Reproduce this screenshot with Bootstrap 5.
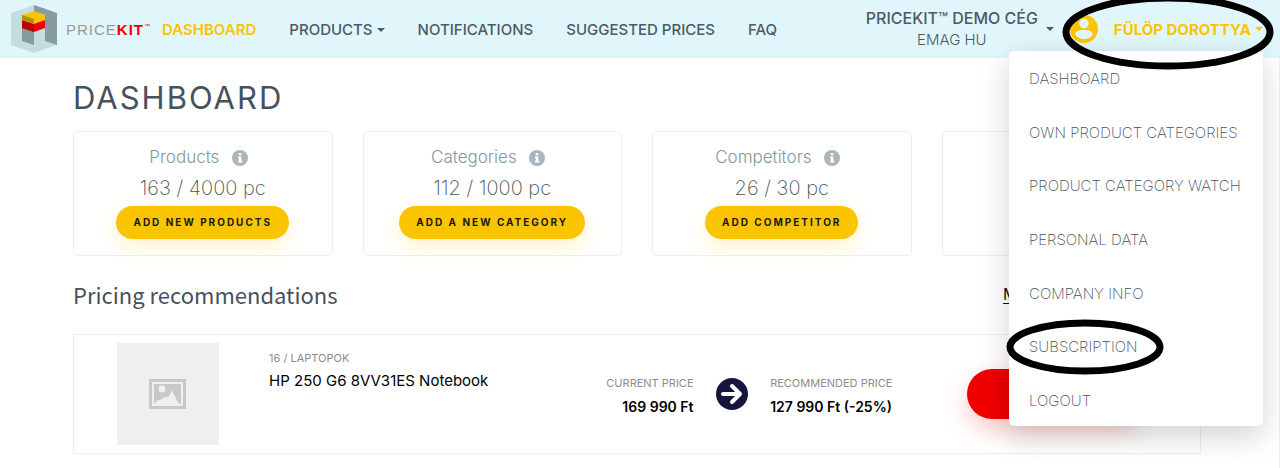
<!DOCTYPE html>
<html lang="en">
<head>
<meta charset="utf-8">
<meta name="viewport" content="width=device-width, initial-scale=1">
<title>PriceKit Dashboard</title>
<link href="https://cdn.jsdelivr.net/npm/bootstrap@5.3.0/dist/css/bootstrap.min.css" rel="stylesheet">
<style>
body{font-family:"Inter","Open Sans",sans-serif;color:#46515c;background:#fff;overflow-x:hidden}
a{color:inherit;text-decoration:none}
.topbar{background:#e1f6fa;min-height:58px;padding:0 17px 0 11px;font-size:15px;line-height:21px;font-weight:500;color:#4b5a66}
.topbar a:hover{color:#fac400}
.brand-name{font-family:"Liberation Sans",sans-serif;font-size:15px;color:#999;letter-spacing:1px;margin-left:9px;width:83px}
.brand-name b{color:#f00000}
.brand-name sup{font-size:6px;letter-spacing:0;top:-7px;color:#f00000}
.main-links{margin-left:13px;gap:33px}
.main-links .current,.user-link{color:#fac400}
.main-links .current{font-weight:600}
.user-link{font-weight:700}
.caret{display:inline-block;border:4px solid transparent;border-top-color:currentColor;border-bottom:0;vertical-align:3px;margin-left:4px}
.company{font-weight:500}
.company small{display:block;font-weight:300;font-size:15px}
.company-name{font-size:16px;font-weight:500}
.user-menu{position:absolute;top:100%;right:0;width:254px;height:375px;z-index:5;background:#fff;border-radius:5px;box-shadow:0 10px 30px rgba(0,0,0,.18);font-weight:200;font-size:15px;color:#46515c}
.user-menu a{padding:2px 20px 0}
.ring{position:absolute;z-index:6;pointer-events:none;overflow:visible}
.ring-user{left:-9px;top:-12px}
.ring-item{left:-2px;top:0}
main{border-right:1px solid #f0f2f2;padding:22px 5px 14px 0}
.page-box{max-width:1158px;margin:0 auto;padding:0 15px}
h1{font-size:31px;line-height:36px;font-weight:400;letter-spacing:2px;margin-bottom:15px}
.stat-row{--bs-gutter-x:30px}
.stat{border:1px solid #e8f0f0;border-radius:5px;height:125px;padding-top:13px;text-align:center}
.stat h3{font-size:17px;line-height:24px;font-weight:300;color:#7f9999;margin:0;padding-right:8px}
.stat h3 svg{margin-left:8px;vertical-align:-3px}
.stat p{font-size:20px;line-height:28px;font-weight:200;margin:5px 0 4px}
.pill{border:0;border-radius:25px;background:#fac400;color:#1a1a1a;font-size:10px;font-weight:700;letter-spacing:2px;height:33px;padding:0 17px;box-shadow:0 8px 24px rgba(250,196,0,.22)}
h2{font-family:"Noto Sans CJK SC","Open Sans",sans-serif;font-size:22px;line-height:32px;font-weight:400;margin:0}
.section-head{padding:22px 0 24px}
.more{width:198px;color:#111;text-decoration:underline;text-underline-offset:3px}
.offer{display:grid;grid-template-columns:188fr 347fr 84fr 77fr 198fr 234fr;border:1px solid #e8f0f0;height:120px;color:#000}
.shot{width:102px;height:102px;background:#f0eeef}
.tag{font-size:11px;line-height:14px;font-weight:400;color:#8c8c8c;white-space:nowrap}
.val{font-size:14px;line-height:20px;font-weight:600;white-space:nowrap;margin-top:7px}
.item-name{font-size:15px;line-height:20px;margin-top:6px}
.accept{border:0;border-radius:25px;background:#f00000;width:176px;height:50px;box-shadow:0 10px 26px rgba(240,0,0,.22)}
</style>
</head>
<body>
<header class="topbar d-flex align-items-center">
  <a href="#" class="d-flex align-items-center" aria-label="PriceKit">
    <svg width="46" height="48" viewBox="0 0 46 48"><path fill="#c3dee0" d="M23 0 46 8v32l-23 8L0 40V8z"/><path fill="#869c9d" d="M23 0 46 8v32l-12-4V10L23 7zM11 20l12 4v16l-12-4z"/><path fill="#f00000" d="m11 15 12 3 11-3v8l-11 4-12-4z"/><path fill="#bd0000" d="m11 15 12 3v9l-12-4z"/><path fill="#fac400" d="m11 10 12-4 11 4v5l-11 4-12-4z"/><path fill="#b48f0a" d="m11 10 12 4v5l-12-4z"/></svg>
    <span class="brand-name text-nowrap">PRICE<b>KIT</b><sup>™</sup></span>
  </a>
  <nav class="main-links d-flex text-nowrap">
    <a href="#" class="current">DASHBOARD</a>
    <a href="#">PRODUCTS<span class="caret"></span></a>
    <a href="#">NOTIFICATIONS</a>
    <a href="#">SUGGESTED PRICES</a>
    <a href="#">FAQ</a>
  </nav>
  <div class="d-flex align-items-center ms-auto text-nowrap">
    <a href="#" class="company d-flex align-items-center"><span class="text-center"><span class="company-name">PRICEKIT™ DEMO CÉG</span><small>EMAG HU</small></span><span class="caret ms-2"></span></a>
    <div class="position-relative ms-3 py-2">
      <a href="#" class="user-link d-flex align-items-center">
        <svg width="28" height="28" viewBox="0 0 28 28"><circle cx="14" cy="14" r="14" fill="#fac400"/><circle cx="14" cy="8.500" r="4.800" fill="#e1f6fa"/><path fill="#e1f6fa" d="M5 19c2-4 6-4 9-4s7 0 9 4c-2 4-5 5-9 5s-7-1-9-5z"/></svg>
        <span class="ms-3">FÜLÖP DOROTTYA</span><span class="caret"></span>
      </a>
      <svg class="ring ring-user" width="212" height="75" viewBox="0 0 212 75"><ellipse cx="107" cy="37" rx="102" ry="34" fill="none" stroke="#000" stroke-width="7"/></svg>
      <div class="user-menu d-flex flex-column">
        <a href="#" class="flex-fill d-flex align-items-center">DASHBOARD</a>
        <a href="#" class="flex-fill d-flex align-items-center">OWN PRODUCT CATEGORIES</a>
        <a href="#" class="flex-fill d-flex align-items-center">PRODUCT CATEGORY WATCH</a>
        <a href="#" class="flex-fill d-flex align-items-center">PERSONAL DATA</a>
        <a href="#" class="flex-fill d-flex align-items-center">COMPANY INFO</a>
        <a href="#" class="flex-fill d-flex align-items-center position-relative">SUBSCRIPTION
          <svg class="ring ring-item" width="157" height="56" viewBox="0 0 157 56"><ellipse cx="78" cy="28" rx="75" ry="24" fill="none" stroke="#000" stroke-width="7"/></svg>
        </a>
        <a href="#" class="flex-fill d-flex align-items-center">LOGOUT</a>
      </div>
    </div>
  </div>
</header>
<svg class="d-none"><symbol id="info" viewBox="0 0 16 16"><circle cx="8" cy="8" r="8" fill="#abb5be"/><path fill="#fff" d="M6.700 3h2.600v2.300H6.700zM6 6.500h3.300v4.200h1V12.500H6v-1.800h.9V8.300H6z"/></symbol></svg>
<main>
  <div class="page-box">
    <h1>DASHBOARD</h1>
    <div class="row stat-row row-cols-4">
      <div class="col"><section class="stat"><h3>Products <svg width="16" height="16"><use href="#info"/></svg></h3><p>163 / 4000 pc</p><button type="button" class="pill">ADD NEW PRODUCTS</button></section></div>
      <div class="col"><section class="stat"><h3>Categories <svg width="16" height="16"><use href="#info"/></svg></h3><p>112 / 1000 pc</p><button type="button" class="pill">ADD A NEW CATEGORY</button></section></div>
      <div class="col"><section class="stat"><h3>Competitors <svg width="16" height="16"><use href="#info"/></svg></h3><p>26 / 30 pc</p><button type="button" class="pill">ADD COMPETITOR</button></section></div>
      <div class="col"><section class="stat"></section></div>
    </div>
    <div class="section-head d-flex justify-content-between align-items-center">
      <h2>Pricing recommendations</h2>
      <a href="#" class="more">M</a>
    </div>
    <article class="offer align-items-center">
      <div class="shot mx-auto d-flex align-items-center justify-content-center"><svg width="37" height="30" viewBox="0 0 37 30"><path fill="#c8c8c8" d="M0 0h37v30H0z"/><path fill="#f0eeef" d="M3 3h31v24H3z"/><path fill="#c8c8c8" d="M5 5h27v20H5z"/><circle cx="13" cy="10" r="3.500" fill="#f0eeef"/><path fill="#f0eeef" d="M5 25c3-5 6-3 9-6 2-2 4 0 6-2 1-2 2-5 3-5s2 4 4 7c1 3 2 5 4 6z"/></svg></div>
      <div class="align-self-start ps-2 pt-3"><div class="tag">16 / LAPTOPOK</div><div class="item-name">HP 250 G6 8VV31ES Notebook</div></div>
      <div class="d-flex flex-column align-items-end pt-1"><div class="tag">CURRENT PRICE</div><div class="val">169 990 Ft</div></div>
      <svg class="mx-auto" width="32" height="32" viewBox="0 0 32 32"><circle cx="16" cy="16" r="16" fill="#14163c"/><path d="M7 16h17M16 8l8 8-8 8" fill="none" stroke="#fff" stroke-width="4" stroke-linecap="round" stroke-linejoin="round"/></svg>
      <div class="pt-1"><div class="tag">RECOMMENDED PRICE</div><div class="val">127 990 Ft (-25%)</div></div>
      <button type="button" class="accept" aria-label="Accept price"></button>
    </article>
  </div>
</main>
<script src="https://cdn.jsdelivr.net/npm/bootstrap@5.3.0/dist/js/bootstrap.bundle.min.js"></script>
</body>
</html>
